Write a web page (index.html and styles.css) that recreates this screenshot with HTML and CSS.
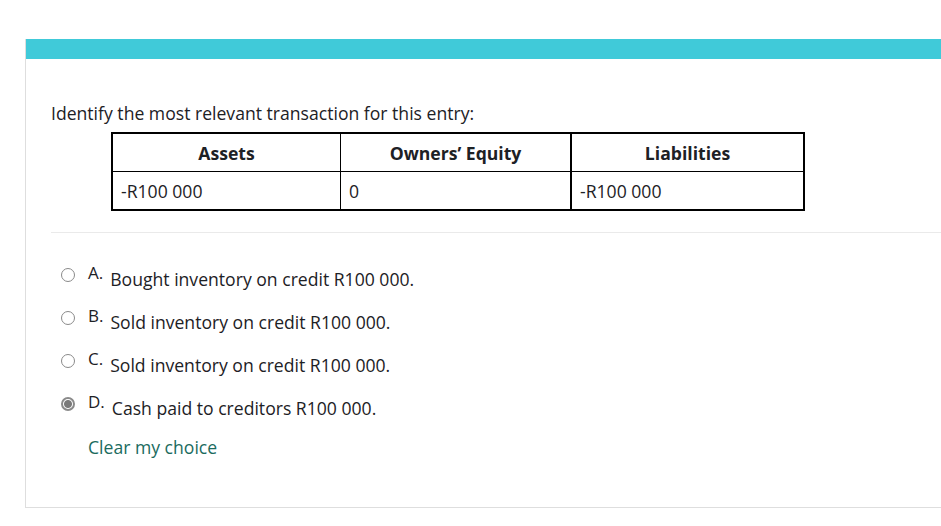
FILE: index.html
```html
<!DOCTYPE html>
<html>
<head>
<meta charset="utf-8">
<link rel="stylesheet" href="styles.css">
</head>
<body>
<div class="que">
  <div class="bar"></div>
  <div class="content">
    <p class="qtext">Identify the most relevant transaction for this entry:</p>
    <table class="entry">
      <tr>
        <th class="c1">Assets</th>
        <th class="c2">Owners’ Equity</th>
        <th class="c3">Liabilities</th>
      </tr>
      <tr>
        <td class="c1">-R100 000</td>
        <td class="c2">0</td>
        <td class="c3">-R100 000</td>
      </tr>
    </table>
    <div class="answers">
      <div class="opt"><span class="radio"></span><span class="num">A.</span><span class="txt">Bought inventory on credit R100 000.</span></div>
      <div class="opt"><span class="radio"></span><span class="num">B.</span><span class="txt">Sold inventory on credit R100 000.</span></div>
      <div class="opt"><span class="radio"></span><span class="num">C.</span><span class="txt">Sold inventory on credit R100 000.</span></div>
      <div class="opt"><span class="radio checked"></span><span class="num">D.</span><span class="txt">Cash paid to creditors R100 000.</span></div>
      <a class="clear" href="#">Clear my choice</a>
    </div>
  </div>
</div>
</body>
</html>
```
FILE: styles.css
```css
html, body {
  margin: 0;
  padding: 0;
  background: #fff;
}
body {
  font-family: "Open Sans", "Noto Sans", sans-serif;
  color: #1d2125;
  font-size: 17.6px;
  padding-top: 39px;
}
.que {
  margin-left: 25px;
  border-left: 1px solid #dedede;
  border-bottom: 1px solid #dedede;
  height: 469px;
  box-sizing: border-box;
}
.bar {
  height: 20px;
  background: #40cad9;
}
.content {
  padding: 42px 0 0 25px;
}
.qtext {
  margin: 0 0 7px 0;
  font-size: 17.6px;
  line-height: 24px;
}
.entry {
  margin-left: 60px;
  border-collapse: collapse;
  border: 2px solid #000;
  width: 694px;
}
.entry th, .entry td {
  border: 1px solid #000;
  height: 37px;
  padding: 0 8px;
  font-size: 17.6px;
}
.entry th {
  font-weight: 700;
  text-align: center;
}
.entry td {
  text-align: left;
}
.entry .c1 { width: 211px; }
.entry .c2 { width: 213px; }
.entry .c3 { border-left-width: 2px; }
.answers {
  border-top: 1px solid #eaeaea;
  margin-top: 21px;
  padding-top: 30px;
  padding-left: 10px;
}
.opt {
  display: flex;
  align-items: flex-start;
  height: 43px;
}
.radio {
  width: 12px;
  height: 12px;
  border: 1px solid #8a8a8a;
  border-radius: 50%;
  margin-top: 5px;
  margin-right: 13px;
  flex: none;
  box-sizing: content-box;
}
.radio.checked {
  width: 10px;
  height: 10px;
  border: 2px solid #8a8a8a;
  background: radial-gradient(circle, #7a7a7a 0 3.5px, #fff 4.5px);
}
.num {
  font-size: 17px;
  line-height: 20px;
  margin-right: 7px;
}
.txt {
  font-size: 17.6px;
  line-height: 20px;
  padding-top: 6px;
}
.clear {
  display: inline-block;
  margin-left: 27px;
  margin-top: -3px;
  color: #1b6b5e;
  text-decoration: none;
  font-size: 17.6px;
  line-height: 20px;
}
```
